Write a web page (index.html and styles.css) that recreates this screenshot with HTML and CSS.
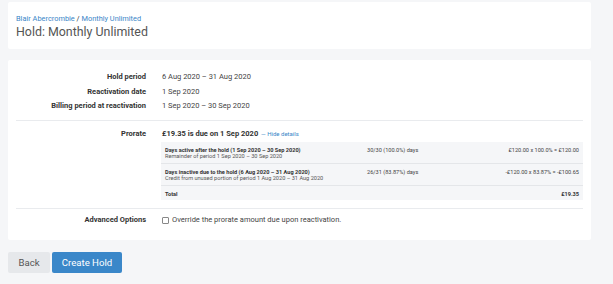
FILE: index.html
```html
<!DOCTYPE html>
<html lang="en">
<head>
    <meta charset="UTF-8">
    <meta name="viewport" content="width=device-width, initial-scale=1.0">
    <title>Hold: Monthly Unlimited</title>
    <link rel="stylesheet" href="styles.css">
</head>
<body>
    <div class="page">
        <header class="card page-header">
            <div class="breadcrumb">
                <a href="#">Blair Abercrombie</a> / <a href="#">Monthly Unlimited</a>
            </div>
            <h1>Hold: Monthly Unlimited</h1>
        </header>

        <main class="card details">
            <div class="section summary">
                <div class="field">
                    <div class="label">Hold period</div>
                    <div class="value">6 Aug 2020 &ndash; 31 Aug 2020</div>
                </div>
                <div class="field">
                    <div class="label">Reactivation date</div>
                    <div class="value">1 Sep 2020</div>
                </div>
                <div class="field">
                    <div class="label">Billing period at reactivation</div>
                    <div class="value">1 Sep 2020 &ndash; 30 Sep 2020</div>
                </div>
            </div>

            <div class="section prorate">
                <div class="field">
                    <div class="label">Prorate</div>
                    <div class="value">
                        <strong>&pound;19.35 is due on 1 Sep 2020</strong>
                        <a href="#" class="toggle">&mdash; Hide details</a>
                        <table class="prorate-table">
                            <tr>
                                <td>
                                    <b>Days active after the hold (1 Sep 2020 &ndash; 30 Sep 2020)</b>
                                    <span>Remainder of period 1 Sep 2020 &ndash; 30 Sep 2020</span>
                                </td>
                                <td class="days">30/30 (100.0%) days</td>
                                <td class="calc">&pound;120.00 x 100.0% = &pound;120.00</td>
                            </tr>
                            <tr>
                                <td>
                                    <b>Days inactive due to the hold (6 Aug 2020 &ndash; 31 Aug 2020)</b>
                                    <span>Credit from unused portion of period 1 Aug 2020 &ndash; 31 Aug 2020</span>
                                </td>
                                <td class="days">26/31 (83.87%) days</td>
                                <td class="calc">-&pound;120.00 x 83.87% = -&pound;100.65</td>
                            </tr>
                            <tr class="total">
                                <td><b>Total</b></td>
                                <td></td>
                                <td class="calc"><b>&pound;19.35</b></td>
                            </tr>
                        </table>
                    </div>
                </div>
            </div>

            <div class="section options">
                <div class="field">
                    <div class="label">Advanced Options</div>
                    <label class="value check">
                        <input type="checkbox">
                        Override the prorate amount due upon reactivation.
                    </label>
                </div>
            </div>
        </main>

        <div class="actions">
            <button class="btn btn-back">Back</button>
            <button class="btn btn-primary">Create Hold</button>
        </div>
    </div>
</body>
</html>
```

FILE: styles.css
```css
* {
    margin: 0;
    padding: 0;
    box-sizing: border-box;
}
body {
    font-family: Roboto, 'Liberation Sans', sans-serif;
    background: #f5f6f8;
    color: #444;
}
a {
    color: #3a86c8;
    text-decoration: none;
}
.page {
    width: 583px;
    margin-left: 8px;
    padding-top: 2px;
}
.card {
    background: white;
    border-radius: 2px;
}
.page-header {
    padding: 12px 8px 9px;
}
.breadcrumb {
    font-size: 7.4px;
    line-height: 10px;
    color: #333;
}
.page-header h1 {
    font-size: 12.4px;
    font-weight: normal;
    color: #555;
    line-height: 16px;
}
.details {
    margin-top: 11px;
    padding: 0 8px;
}
.section {
    border-bottom: 1px solid #e9ebee;
}
.section:last-child {
    border-bottom: none;
}
.summary {
    padding: 10px 0 6px;
}
.summary .field {
    line-height: 14.7px;
}
.field {
    display: grid;
    grid-template-columns: 130px 1fr;
    column-gap: 16px;
    font-size: 7.5px;
    line-height: 14.5px;
}
.label {
    text-align: right;
    font-weight: bold;
    color: #333;
}
.value strong {
    color: #333;
}
.toggle {
    font-size: 6px;
}
.prorate {
    padding: 6px 0 8px;
}
.prorate .value {
    margin-left: -1px;
}
.prorate .value strong,
.prorate .toggle {
    margin-left: 1px;
}
.prorate-table {
    width: 100%;
    background: #f5f6f8;
    border-collapse: collapse;
    font-size: 5.6px;
    line-height: 6.5px;
}
.prorate-table td {
    padding: 5px 4px 3px;
    vertical-align: top;
    border-top: 1px solid #e4e6e9;
}
.prorate-table tr:first-child td {
    border-top: none;
}
.prorate-table b {
    display: block;
    color: #333;
}
.prorate-table span {
    color: #555;
}
.prorate-table .days {
    width: 100px;
}
.prorate-table .calc {
    text-align: right;
    width: 120px;
}
.options {
    padding: 4px 0 12px;
}
.check {
    display: flex;
    align-items: center;
    gap: 3px;
}
.check input {
    appearance: none;
    width: 7px;
    height: 7px;
    border: 1px solid #888;
    border-radius: 1px;
    background: white;
}
.actions {
    display: flex;
    gap: 2px;
    margin-top: 12px;
}
.btn {
    font-family: Roboto, 'Liberation Sans', sans-serif;
    font-size: 9.6px;
    height: 21px;
    border: none;
    border-radius: 2px;
    background: #e6e8eb;
    color: #555;
}
.btn-back {
    width: 42px;
}
.btn-primary {
    width: 70px;
    background: #3a87c9;
    color: white;
}
```
